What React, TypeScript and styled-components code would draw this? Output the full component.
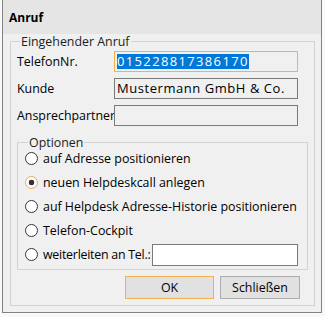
import React from "react";
import styled, { createGlobalStyle } from "styled-components";

const Global = createGlobalStyle`
  html, body { margin: 0; padding: 0; background: #f9f9f9; }
  body {
    font-family: "Open Sans", "Noto Sans", Arial, sans-serif;
    font-size: 12.4px;
    line-height: 15px;
    color: #000;
  }
`;

const Window = styled.div`
  margin-left: 2px;
  width: 320px;
  height: 313px;
  box-sizing: border-box;
  border: 1px solid #828282;
  border-top: none;
  background: #f0f0f0;
  display: flex;
  flex-direction: column;
`;

const TitleBar = styled.div`
  flex: none;
  height: 34px;
  background: #e5e5e5;
  display: flex;
  align-items: center;
  padding-left: 6px;
  font-weight: bold;
  font-size: 12px;
`;

const Body = styled.div`
  flex: 1;
  display: flex;
  flex-direction: column;
  padding: 0 6px 6px 7px;
`;

const Group = styled.fieldset<{ $grow?: boolean }>`
  margin: 0;
  padding: 0;
  border: 1px solid #d2d2d2;
  min-width: 0;
  ${(p) => (p.$grow ? "flex: 1;" : "")}
`;

const Legend = styled.legend<{ $offset: number }>`
  margin-left: ${(p) => p.$offset}px;
  padding: 0 1px;
  line-height: 15px;
  color: #1e1e1e;
`;

const OuterContent = styled.div`
  display: flex;
  flex-direction: column;
  padding: 2px 0 3px 6px;
`;

const FormGrid = styled.div`
  display: grid;
  grid-template-columns: 97px 184px;
  row-gap: 6px;
  align-items: center;
`;

const Label = styled.div`
  white-space: nowrap;
`;

const Field = styled.div<{ $focused?: boolean; $white?: boolean; $spacing?: number }>`
  box-sizing: border-box;
  height: 21px;
  border: 1px solid ${(p) => (p.$focused ? "#f4b14b" : "#7a7a7a")};
  background: ${(p) => (p.$white ? "#fff" : "#f0f0f0")};
  padding: 0 2px;
  font-size: 13px;
  letter-spacing: ${(p) => p.$spacing ?? 0.55}px;
  line-height: 19px;
  white-space: nowrap;
  overflow: hidden;
`;

const Selected = styled.span`
  display: inline-block;
  line-height: 15px;
  background: #0078d7;
  color: #fff;
`;

const OptionsWrap = styled.div`
  margin-top: 9px;
  width: 291px;
`;

const OptionList = styled.div`
  display: flex;
  flex-direction: column;
  gap: 7px;
  padding: 0 0 6px 7px;
`;

const OptionRow = styled.label`
  display: flex;
  align-items: center;
  height: 17px;
  gap: 5px;
  white-space: nowrap;
`;

const Caption = styled.span`
  letter-spacing: -0.25px;
`;

const Radio = styled.input.attrs({ type: "radio" })`
  appearance: none;
  margin: 0;
  flex: none;
  width: 13px;
  height: 13px;
  border-radius: 50%;
  border: 1px solid #333;
  background: #fff;
  box-sizing: border-box;
  &:checked {
    border-color: #f0a94a;
    background: radial-gradient(circle, #333 0 2.6px, #fff 3.1px);
  }
`;

const PhoneField = styled(Field)`
  height: 22px;
  width: 146px;
  margin-left: -3px;
`;

const ButtonRow = styled.div`
  display: flex;
  justify-content: flex-end;
  gap: 6px;
  margin-top: 6px;
  padding-right: 14px;
`;

const Button = styled.button<{ $default?: boolean; $w: number }>`
  width: ${(p) => p.$w}px;
  height: 23px;
  margin: 0;
  padding: 0;
  font-family: inherit;
  font-size: 12.4px;
  color: #000;
  background: #e1e1e1;
  border: 1px solid ${(p) => (p.$default ? "#f4b14b" : "#adadad")};
`;

export default function App() {
  return (
    <>
      <Global />
      <Window>
        <TitleBar>Anruf</TitleBar>
        <Body>
          <Group $grow>
            <Legend $offset={9}>Eingehender Anruf</Legend>
            <OuterContent>
              <FormGrid>
                <Label>TelefonNr.</Label>
                <Field $focused $spacing={1.35}>
                  <Selected>015228817386170</Selected>
                </Field>
                <Label>Kunde</Label>
                <Field>Mustermann GmbH &amp; Co.</Field>
                <Label>Ansprechpartner</Label>
                <Field />
              </FormGrid>
              <OptionsWrap>
                <Group>
                  <Legend $offset={10}>Optionen</Legend>
                  <OptionList>
                    <OptionRow>
                      <Radio name="opt" />
                      auf Adresse positionieren
                    </OptionRow>
                    <OptionRow>
                      <Radio name="opt" defaultChecked />
                      neuen Helpdeskcall anlegen
                    </OptionRow>
                    <OptionRow>
                      <Radio name="opt" />
                      auf Helpdesk Adresse-Historie positionieren
                    </OptionRow>
                    <OptionRow>
                      <Radio name="opt" />
                      Telefon-Cockpit
                    </OptionRow>
                    <OptionRow>
                      <Radio name="opt" />
                      <Caption>weiterleiten an Tel.:</Caption>
                      <PhoneField $white />
                    </OptionRow>
                  </OptionList>
                </Group>
              </OptionsWrap>
              <ButtonRow>
                <Button $default $w={89}>OK</Button>
                <Button $w={80}>Schließen</Button>
              </ButtonRow>
            </OuterContent>
          </Group>
        </Body>
      </Window>
    </>
  );
}
